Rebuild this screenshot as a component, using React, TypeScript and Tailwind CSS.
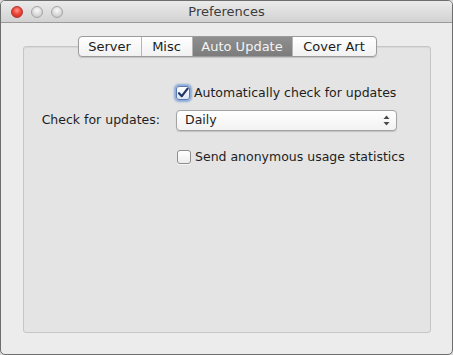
import React from "react";

const font = { fontFamily: '"DejaVu Sans", "Liberation Sans", sans-serif' };

function TrafficLight({ color }: { color: "red" | "gray" }) {
  return (
    <div
      className={
        color === "red"
          ? "w-[12px] h-[12px] rounded-full border border-[#b0352f] bg-[radial-gradient(circle_at_50%_35%,#ff9a8c_0%,#f0463b_45%,#c42a20_100%)]"
          : "w-[12px] h-[12px] rounded-full border border-[#a5a5a5] bg-[radial-gradient(circle_at_50%_35%,#fafafa_0%,#dcdcdc_50%,#bdbdbd_100%)]"
      }
    />
  );
}

function Checkbox({ checked }: { checked?: boolean }) {
  if (checked) {
    return (
      <div className="w-[14px] h-[14px] rounded-[3px] border border-[#5a7bb0] bg-gradient-to-b from-[#fdfdfd] to-[#dfe6f0] shadow-[0_0_2px_2px_rgba(110,150,215,0.75)] flex items-center justify-center">
        <svg width="12" height="12" viewBox="0 0 12 12">
          <path d="M2 6.2 L4.8 9.2 L10.6 1.6" fill="none" stroke="#1f3667" strokeWidth="2.2" strokeLinecap="round" strokeLinejoin="round" />
        </svg>
      </div>
    );
  }
  return (
    <div className="w-[14px] h-[14px] rounded-[3px] border border-[#8f8f8f] bg-gradient-to-b from-[#ffffff] to-[#ececec] shadow-[0_1px_0_rgba(255,255,255,0.6)]" />
  );
}

const tabs = ["Server", "Misc", "Auto Update", "Cover Art"];
const tabWidths = ["w-[62px]", "w-[51px]", "w-[100px]", "w-[84px]"];

export default function App() {
  return (
    <div className="w-[453px] h-[355px] bg-[#d9d9d9]" style={font}>
      <div className="w-full h-full border border-[#6e6e6e] rounded-[5px] overflow-hidden flex flex-col bg-[#ececec]">
        {/* title bar */}
        <div className="relative h-[22px] shrink-0 bg-gradient-to-b from-[#ebebeb] to-[#d2d2d2] border-b border-[#9a9a9a] flex items-center">
          <div className="flex items-center gap-[8px] pl-[10px]">
            <TrafficLight color="red" />
            <TrafficLight color="gray" />
            <TrafficLight color="gray" />
          </div>
          <div className="absolute inset-0 flex items-center justify-center text-[13px] text-[#3c3c3c] pointer-events-none">
            Preferences
          </div>
        </div>

        {/* content */}
        <div className="flex-1 flex flex-col pt-[13px] pl-[22px] pr-[21px] pb-[21px]">
          <div className="relative z-10 flex justify-center">
            <div className="flex h-[21px] rounded-[4px] border border-[#9b9b9b] bg-gradient-to-b from-[#ffffff] to-[#f1f1f1] shadow-[0_1px_1px_rgba(0,0,0,0.15)] overflow-hidden">
              {tabs.map((t, i) => (
                <div
                  key={t}
                  className={
                    (i === 2
                      ? "bg-gradient-to-b from-[#8f8f8f] to-[#7c7c7c] text-[#f4f4f4] "
                      : "text-[#1c1c1c] ") +
                    (i > 0 ? "border-l border-[#b5b5b5] " : "") +
                    tabWidths[i] +
                    " flex items-center justify-center text-[13px]"
                  }
                >
                  {t}
                </div>
              ))}
            </div>
          </div>

          <div className="-mt-[11px] flex-1 rounded-[3px] border border-[#c6c6c6] bg-[#e4e4e4] shadow-[inset_0_1px_1px_rgba(0,0,0,0.06)] pt-[37px]">
            <div className="flex flex-col text-[12.5px] text-[#1e1e1e]">
              <div className="flex items-center h-[18px]">
                <div className="w-[152px] shrink-0" />
                <Checkbox checked />
                <span className="ml-[4px]">Automatically check for updates</span>
              </div>

              <div className="flex items-center mt-[8px] h-[21px]">
                <div className="w-[136px] shrink-0 text-right">Check for updates:</div>
                <div className="ml-[16px] w-[221px] h-[21px] rounded-[4px] border border-[#a3a3a3] bg-gradient-to-b from-[#ffffff] to-[#f2f2f2] shadow-[0_1px_1px_rgba(0,0,0,0.15)] flex items-center justify-between pl-[8px] pr-[6px]">
                  <span>Daily</span>
                  <svg width="7" height="11" viewBox="0 0 7 11">
                    <path d="M3.5 0.5 L6.5 4 L0.5 4 Z" fill="#4a4a4a" />
                    <path d="M3.5 10.5 L6.5 7 L0.5 7 Z" fill="#4a4a4a" />
                  </svg>
                </div>
              </div>

              <div className="flex items-center mt-[17px] h-[18px]">
                <div className="w-[153px] shrink-0" />
                <Checkbox />
                <span className="ml-[4px]">Send anonymous usage statistics</span>
              </div>
            </div>
          </div>
        </div>
      </div>
    </div>
  );
}
